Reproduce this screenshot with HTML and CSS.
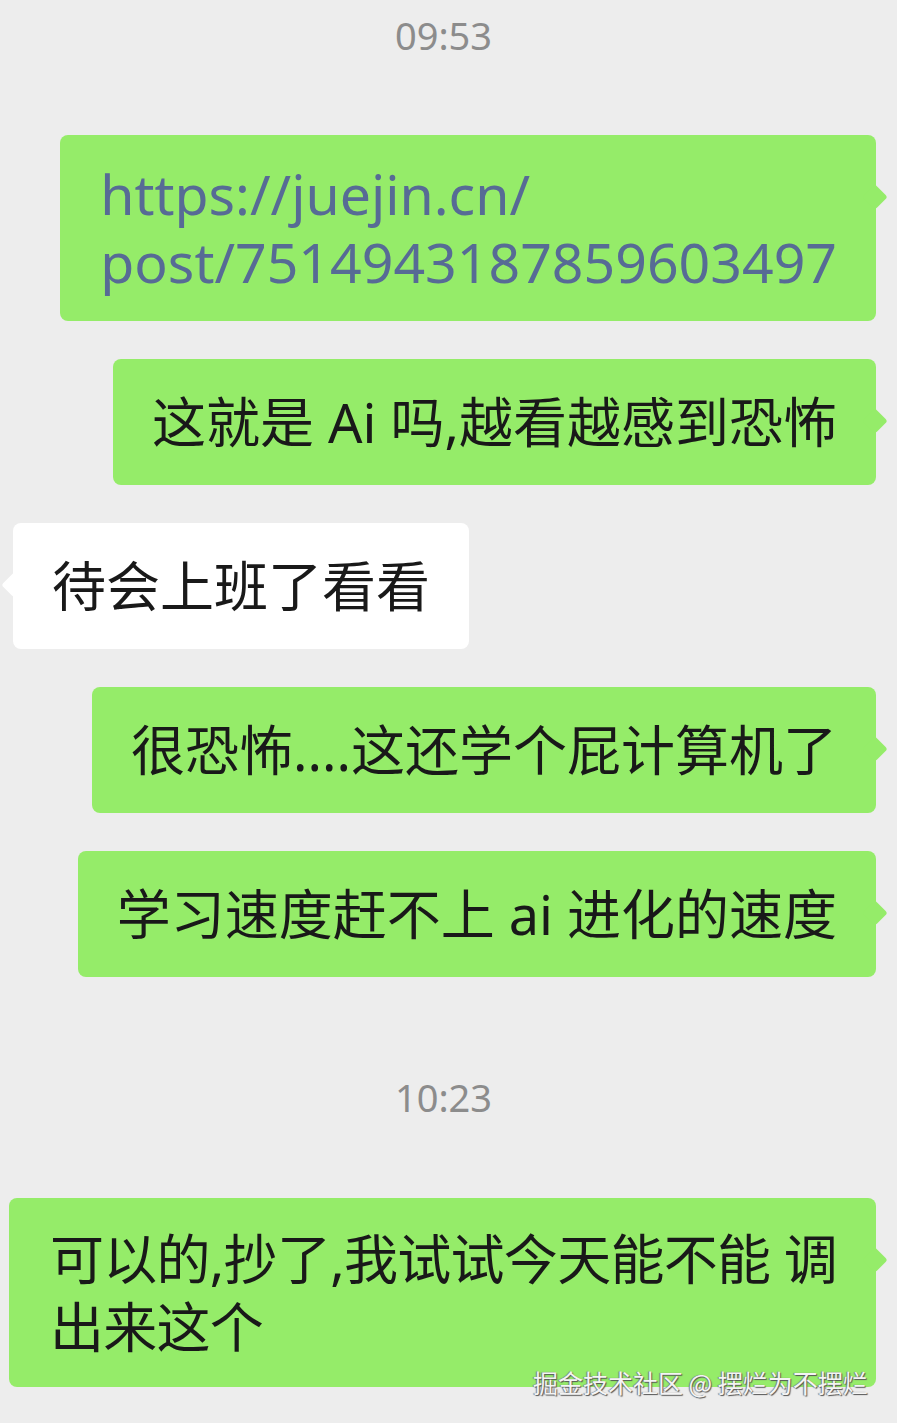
FILE: index.html
```html
<!DOCTYPE html>
<html lang="zh-CN">
<head>
    <meta charset="UTF-8">
    <meta name="viewport" content="width=device-width, initial-scale=1.0">
    <title>聊天记录</title>
    <link rel="stylesheet" href="styles.css">
</head>
<body>

<div class="chat">

    <div class="time">09:53</div>

    <div class="row mine">
        <div class="bubble link">https://juejin.cn/<br>post/7514943187859603497</div>
    </div>

    <div class="row mine">
        <div class="bubble">这就是 Ai 吗,越看越感到恐怖</div>
    </div>

    <div class="row theirs">
        <div class="bubble">待会上班了看看</div>
    </div>

    <div class="row mine">
        <div class="bubble">很恐怖....这还学个屁计算机了</div>
    </div>

    <div class="row mine">
        <div class="bubble">学习速度赶不上 ai 进化的速度</div>
    </div>

    <div class="time later">10:23</div>

    <div class="row mine">
        <div class="bubble long">可以的,抄了,我试试今天能不能 调<br>出来这个</div>
    </div>

</div>

<!-- watermark from the original screenshot -->
<div class="watermark">掘金技术社区 @ 摆烂为不摆烂</div>

</body>
</html>
```

FILE: styles.css
```css
body { margin: 0; background: #ededed; font-family: "Noto Sans", "Noto Sans CJK SC", sans-serif; color: #191919; }
.chat { width: 897px; display: flex; flex-direction: column; gap: 38px; padding-bottom: 37px; position: relative; }
.time { text-align: center; font-size: 38px; line-height: 50px; color: #8c8c8c; margin: 10px 0 37px; padding-right: 10px; }
.time.later { margin: 57px 0 38px; }
.row { display: flex; }
.row.mine { justify-content: flex-end; padding-right: 21px; }
.row.theirs { justify-content: flex-start; padding-left: 13px; }
.bubble { position: relative; font-size: 54px; line-height: 68px; padding: 29px 39px; border-radius: 8px; background: #95ec69; white-space: nowrap; }
.bubble::after { content: ""; position: absolute; top: 53px; width: 18px; height: 18px; background: inherit; border-radius: 3px; transform: rotate(45deg); }
.mine .bubble::after { right: -8px; }
.theirs .bubble { background: #fff; }
.theirs .bubble::after { left: -8px; }
.bubble.link { color: #576b95; font-size: 55.4px; padding: 25px 39px 25px 40px; }
.bubble.long { padding: 27px 39px 26px 41px; letter-spacing: -0.7px; }
.watermark { position: absolute; left: 533px; top: 1364px; font-family: "Noto Sans CJK SC", sans-serif; font-size: 25px; color: #f4f4f4; text-shadow: 1px 1px 1px #555, -1px 0 1px #777; }
```
